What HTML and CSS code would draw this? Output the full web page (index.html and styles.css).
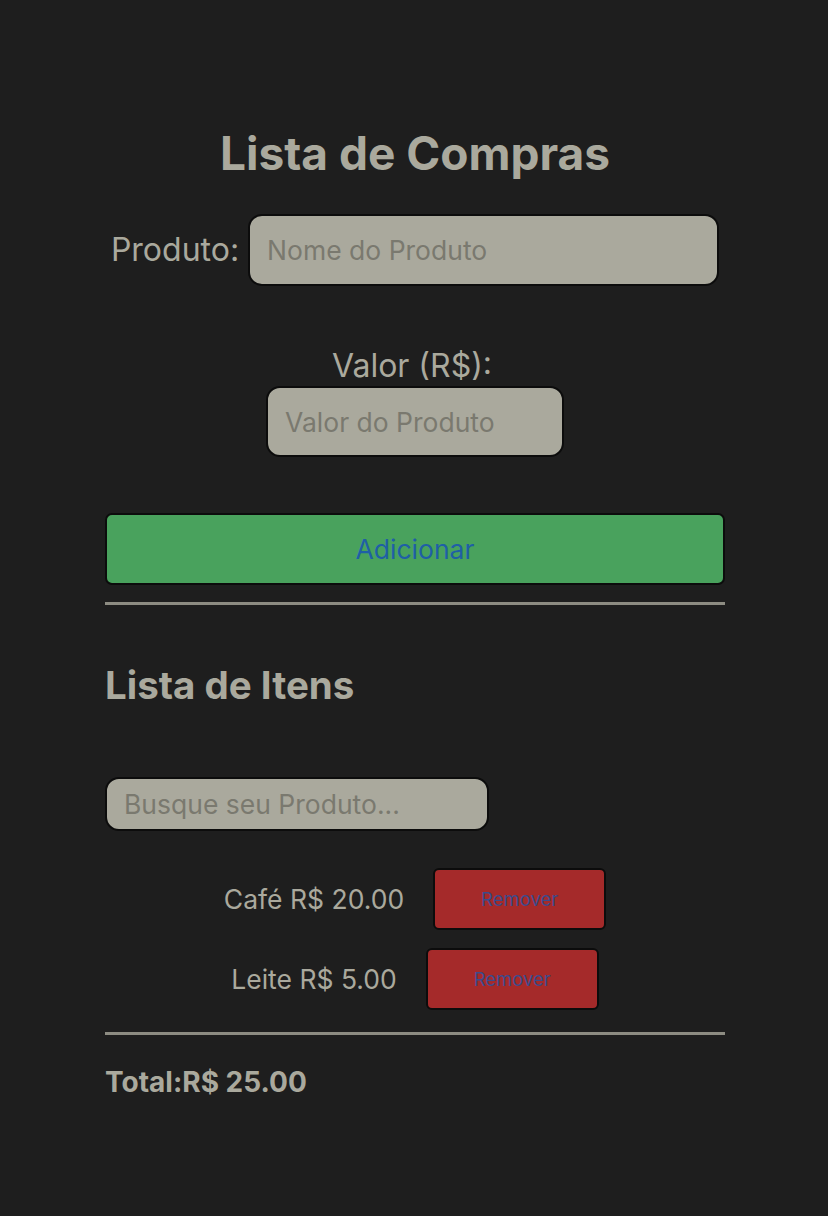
FILE: index.html
```html
<!DOCTYPE html>
<html lang="pt-BR">
<head>
<meta charset="utf-8">
<title>Lista de Compras</title>
<link rel="stylesheet" href="styles.css">
</head>
<body>
<main class="app">
  <h1 class="title">Lista de Compras</h1>
  <div class="group group-inline">
    <label class="label" for="produto">Produto:</label>
    <input class="field field-name" id="produto" type="text" placeholder="Nome do Produto">
  </div>
  <div class="group group-stack">
    <label class="label label-stack" for="valor">Valor (R$):</label>
    <input class="field field-value" id="valor" type="text" placeholder="Valor do Produto">
  </div>
  <button class="add-btn" type="button">Adicionar</button>
  <hr class="rule rule-top">
  <h2 class="subtitle">Lista de Itens</h2>
  <input class="field field-search" type="text" placeholder="Busque seu Produto...">
  <ul class="items">
    <li class="item"><span class="item-text">Café R$ 20.00</span><button class="remove-btn" type="button">Remover</button></li>
    <li class="item"><span class="item-text">Leite R$ 5.00</span><button class="remove-btn" type="button">Remover</button></li>
  </ul>
  <hr class="rule rule-bottom">
  <p class="total">Total:R$ 25.00</p>
</main>
</body>
</html>
```

FILE: styles.css
```css
html, body {
  margin: 0;
  padding: 0;
  background: #1e1e1e;
}
body {
  font-family: Inter, "Noto Sans", sans-serif;
  color: #aaa99d;
  min-height: 1216px;
}
.app {
  width: 620px;
  margin: 0 0 0 105px;
  padding: 125px 0 0 0;
  box-sizing: border-box;
  display: flex;
  flex-direction: column;
}
.title {
  margin: 0;
  text-align: center;
  font-size: 46px;
  font-weight: 700;
  line-height: 56px;
}
.group {
  display: flex;
  align-items: center;
  justify-content: center;
}
.group-inline {
  margin-top: 33px;
  gap: 9px;
}
.group-stack {
  flex-direction: column;
  margin-top: 62px;
  gap: 2px;
}
.label {
  font-size: 32px;
  line-height: 36px;
}
.label-stack {
  padding-right: 6px;
}
.field {
  box-sizing: border-box;
  background: #aaa99d;
  border: 2px solid #0c0c0c;
  border-radius: 14px;
  font-family: Inter, "Noto Sans", sans-serif;
  font-size: 26.5px;
  color: #2a2a2a;
  padding: 0 17px;
  outline: none;
}
.field::placeholder {
  color: #7a796f;
}
.field-name {
  width: 471px;
  height: 72px;
}
.field-value {
  width: 298px;
  height: 71px;
}
.add-btn {
  margin-top: 56px;
  height: 72px;
  width: 620px;
  background: #49a25d;
  border: 2px solid #0c0c0c;
  border-radius: 7px;
  color: #1f5fa6;
  font-family: Inter, "Noto Sans", sans-serif;
  font-size: 26.5px;
}
.rule {
  width: 620px;
  margin: 0;
  border: 0;
  height: 3px;
  background: #8d8c82;
}
.rule-top {
  margin-top: 17px;
}
.subtitle {
  margin: 57px 0 0 0;
  font-size: 38.5px;
  font-weight: 700;
  line-height: 46px;
}
.field-search {
  margin-top: 69px;
  width: 384px;
  height: 54px;
}
.items {
  list-style: none;
  margin: 37px 0 0 0;
  padding: 0;
  display: flex;
  flex-direction: column;
  gap: 18px;
}
.item {
  display: flex;
  align-items: center;
  justify-content: center;
  gap: 29px;
}
.item-text {
  font-size: 26.5px;
}
.remove-btn {
  width: 173px;
  height: 62px;
  background: #a52a2a;
  border: 2px solid #0c0c0c;
  border-radius: 6px;
  color: #3c4b8c;
  font-family: Inter, "Noto Sans", sans-serif;
  font-size: 18.5px;
}
.rule-bottom {
  margin-top: 22px;
}
.total {
  margin: 31px 0 0 0;
  font-size: 28px;
  font-weight: 700;
  line-height: 32px;
}
```
